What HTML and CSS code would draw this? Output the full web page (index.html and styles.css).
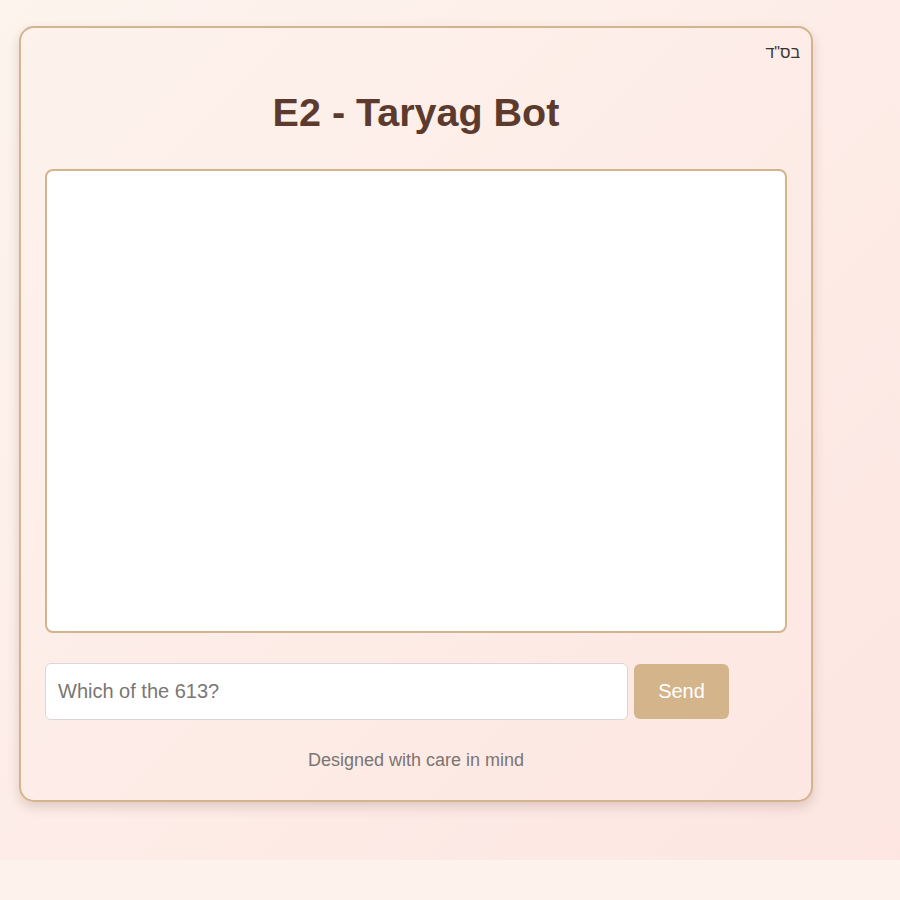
FILE: index.html
```html
<!DOCTYPE html>
<html lang="en">
<head>
<meta charset="utf-8">
<title>E2 - Taryag Bot</title>
<link rel="stylesheet" href="styles.css">
</head>
<body>
<div class="page">
  <div class="card">
    <div class="bsd" dir="rtl">בס"ד</div>
    <h1 class="title">E2 - Taryag Bot</h1>
    <div class="chat"></div>
    <div class="input-row">
      <input class="msg" type="text" placeholder="Which of the 613?">
      <button class="send">Send</button>
    </div>
    <p class="footer">Designed with care in mind</p>
  </div>
</div>
</body>
</html>
```

FILE: styles.css
```css
html {
  background: #fdf3ec;
}
body {
  margin: 0;
  font-family: "Liberation Sans", Arial, sans-serif;
}
.page {
  height: 860px;
  box-sizing: border-box;
  padding: 26px 0 0 19px;
  background: linear-gradient(135deg, #fdf4ee 0%, #fdebe6 60%, #fde6e2 100%);
}
.card {
  position: relative;
  width: 794px;
  height: 776px;
  box-sizing: border-box;
  border: 2px solid #d3b48e;
  border-radius: 15px;
  padding: 0 24px 30px;
  background: linear-gradient(135deg, #fdf2ec 0%, #fde7e2 100%);
  box-shadow: 0 5px 12px rgba(90, 50, 30, 0.18);
}
.bsd {
  position: absolute;
  top: 16px;
  right: 11px;
  font-size: 16px;
  line-height: 18px;
  color: #3a3330;
}
.title {
  margin: 62px 0 34px;
  text-align: center;
  font-size: 39.5px;
  line-height: 45px;
  font-weight: bold;
  color: #5c3b2e;
}
.chat {
  height: 464px;
  box-sizing: border-box;
  background: #fff;
  border: 2px solid #d3b48e;
  border-radius: 8px;
}
.input-row {
  display: flex;
  align-items: center;
  gap: 6px;
  margin-top: 30px;
}
.msg {
  width: 583px;
  height: 57px;
  box-sizing: border-box;
  border: 1px solid #dcd6d6;
  border-radius: 6px;
  background: #fff;
  padding: 0 12px;
  font-family: "Liberation Sans", Arial, sans-serif;
  font-size: 20px;
  color: #333;
  outline: none;
}
.msg::placeholder {
  color: #7a7674;
}
.send {
  width: 95px;
  height: 55px;
  border: none;
  border-radius: 6px;
  background: #d4b48b;
  color: #fff;
  font-family: "Liberation Sans", Arial, sans-serif;
  font-size: 20px;
  padding: 0;
}
.footer {
  margin: 30px 0 0;
  text-align: center;
  font-size: 18px;
  line-height: 21px;
  color: #7a7472;
}
```
